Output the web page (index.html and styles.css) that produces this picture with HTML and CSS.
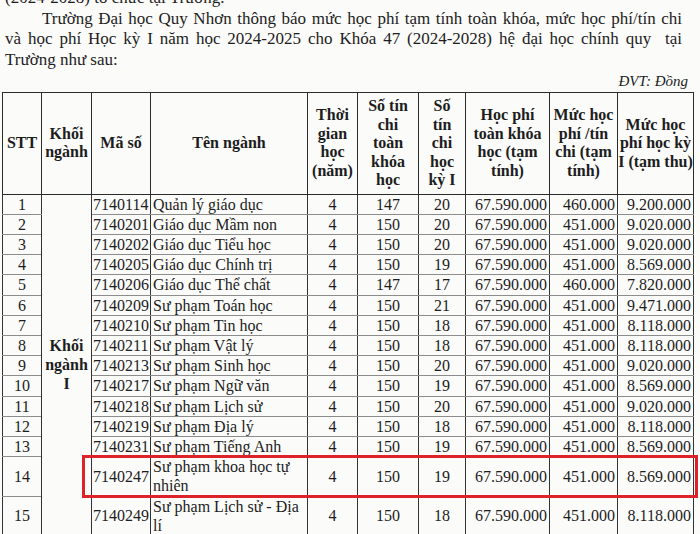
FILE: index.html
```html
<!DOCTYPE html>
<html lang="vi">
<head>
<meta charset="utf-8">
<title>Học phí Khóa 47</title>
<link rel="stylesheet" href="styles.css">
</head>
<body>
<div class="page">
  <div class="intro">
    <div class="line">(2024-2028) tổ chức tại Trường.</div>
    <div class="line just indent">Trường Đại học Quy Nhơn thông báo mức học phí tạm tính toàn khóa, mức học phí/tín chi</div>
    <div class="line just">và học phí Học kỳ I năm học 2024-2025 cho Khóa 47 (2024-2028) hệ đại học chính quy&nbsp; tại</div>
    <div class="line">Trường như sau:</div>
  </div>
  <div class="unit">ĐVT: Đồng</div>
  <table class="fees">
    <colgroup>
      <col class="c-stt"><col class="c-group"><col class="c-code"><col class="c-name"><col class="c-years">
      <col class="c-credits"><col class="c-sem"><col class="c-total"><col class="c-rate"><col class="c-fee">
    </colgroup>
    <thead>
      <tr>
        <th>STT</th>
        <th>Khối<br>ngành</th>
        <th>Mã số</th>
        <th>Tên ngành</th>
        <th>Thời<br>gian<br>học<br>(năm)</th>
        <th>Số tín<br>chi<br>toàn<br>khóa<br>học</th>
        <th>Số<br>tín<br>chi<br>học<br>kỳ I</th>
        <th>Học phí<br>toàn khóa<br>học (tạm<br>tính)</th>
        <th>Mức học<br>phí /tín<br>chi (tạm<br>tính)</th>
        <th>Mức học<br>phí học kỳ<br>I (tạm thu)</th>
      </tr>
    </thead>
    <tbody>
      <tr><td class="ctr">1</td><td class="group" rowspan="15">Khối<br>ngành<br>I</td><td class="code">7140114</td><td class="name">Quản lý giáo dục</td><td class="ctr">4</td><td class="ctr">147</td><td class="ctr">20</td><td class="num">67.590.000</td><td class="num">460.000</td><td class="num">9.200.000</td></tr>
      <tr><td class="ctr">2</td><td class="code">7140201</td><td class="name">Giáo dục Mầm non</td><td class="ctr">4</td><td class="ctr">150</td><td class="ctr">20</td><td class="num">67.590.000</td><td class="num">451.000</td><td class="num">9.020.000</td></tr>
      <tr><td class="ctr">3</td><td class="code">7140202</td><td class="name">Giáo dục Tiểu học</td><td class="ctr">4</td><td class="ctr">150</td><td class="ctr">20</td><td class="num">67.590.000</td><td class="num">451.000</td><td class="num">9.020.000</td></tr>
      <tr><td class="ctr">4</td><td class="code">7140205</td><td class="name">Giáo dục Chính trị</td><td class="ctr">4</td><td class="ctr">150</td><td class="ctr">19</td><td class="num">67.590.000</td><td class="num">451.000</td><td class="num">8.569.000</td></tr>
      <tr><td class="ctr">5</td><td class="code">7140206</td><td class="name">Giáo dục Thể chất</td><td class="ctr">4</td><td class="ctr">147</td><td class="ctr">17</td><td class="num">67.590.000</td><td class="num">460.000</td><td class="num">7.820.000</td></tr>
      <tr><td class="ctr">6</td><td class="code">7140209</td><td class="name">Sư phạm Toán học</td><td class="ctr">4</td><td class="ctr">150</td><td class="ctr">21</td><td class="num">67.590.000</td><td class="num">451.000</td><td class="num">9.471.000</td></tr>
      <tr><td class="ctr">7</td><td class="code">7140210</td><td class="name">Sư phạm Tin học</td><td class="ctr">4</td><td class="ctr">150</td><td class="ctr">18</td><td class="num">67.590.000</td><td class="num">451.000</td><td class="num">8.118.000</td></tr>
      <tr><td class="ctr">8</td><td class="code">7140211</td><td class="name">Sư phạm Vật lý</td><td class="ctr">4</td><td class="ctr">150</td><td class="ctr">18</td><td class="num">67.590.000</td><td class="num">451.000</td><td class="num">8.118.000</td></tr>
      <tr><td class="ctr">9</td><td class="code">7140213</td><td class="name">Sư phạm Sinh học</td><td class="ctr">4</td><td class="ctr">150</td><td class="ctr">20</td><td class="num">67.590.000</td><td class="num">451.000</td><td class="num">9.020.000</td></tr>
      <tr><td class="ctr">10</td><td class="code">7140217</td><td class="name">Sư phạm Ngữ văn</td><td class="ctr">4</td><td class="ctr">150</td><td class="ctr">19</td><td class="num">67.590.000</td><td class="num">451.000</td><td class="num">8.569.000</td></tr>
      <tr><td class="ctr">11</td><td class="code">7140218</td><td class="name">Sư phạm Lịch sử</td><td class="ctr">4</td><td class="ctr">150</td><td class="ctr">20</td><td class="num">67.590.000</td><td class="num">451.000</td><td class="num">9.020.000</td></tr>
      <tr><td class="ctr">12</td><td class="code">7140219</td><td class="name">Sư phạm Địa lý</td><td class="ctr">4</td><td class="ctr">150</td><td class="ctr">18</td><td class="num">67.590.000</td><td class="num">451.000</td><td class="num">8.118.000</td></tr>
      <tr><td class="ctr">13</td><td class="code">7140231</td><td class="name">Sư phạm Tiếng Anh</td><td class="ctr">4</td><td class="ctr">150</td><td class="ctr">19</td><td class="num">67.590.000</td><td class="num">451.000</td><td class="num">8.569.000</td></tr>
      <tr class="tall"><td class="ctr">14</td><td class="code marked">7140247<span class="mark"></span></td><td class="name">Sư phạm khoa học tự nhiên</td><td class="ctr">4</td><td class="ctr">150</td><td class="ctr">19</td><td class="num">67.590.000</td><td class="num">451.000</td><td class="num">8.569.000</td></tr>
      <tr class="tall"><td class="ctr">15</td><td class="code">7140249</td><td class="name">Sư phạm Lịch sử - Địa lí</td><td class="ctr">4</td><td class="ctr">150</td><td class="ctr">18</td><td class="num">67.590.000</td><td class="num">451.000</td><td class="num">8.118.000</td></tr>
    </tbody>
  </table>
</div>
</body>
</html>
```

FILE: styles.css
```css
html, body {
  margin: 0;
  padding: 0;
  background: #fbfbfa;
}

body {
  color: #1d1d1d;
  font-family: "Liberation Serif", "Times New Roman", serif;
}

.page {
  width: 700px;
  height: 534px;
  overflow: hidden;
}

.intro {
  margin-top: -12px;
  padding: 0 18px 0 5px;
  font-size: 17px;
  line-height: 20.5px;
}

.line {
  white-space: nowrap;
}

.just {
  text-align: justify;
  text-align-last: justify;
}

.indent {
  padding-left: 37px;
}

.unit {
  margin-top: 3px;
  padding-right: 12px;
  text-align: right;
  font-style: italic;
  font-size: 15px;
  line-height: 17px;
}

.fees {
  margin: 2px 0 0 2px;
  width: 691px;
  table-layout: fixed;
  border-collapse: collapse;
  font-size: 16px;
}

.c-stt { width: 39px; }
.c-group { width: 50px; }
.c-code { width: 59px; }
.c-name { width: 157px; }
.c-years { width: 50px; }
.c-credits { width: 61px; }
.c-sem { width: 47px; }
.c-total { width: 84px; }
.c-rate { width: 68px; }
.c-fee { width: 76px; }

.fees th {
  font-weight: bold;
  line-height: 18.5px;
  padding: 4px 0;
  text-align: center;
  vertical-align: middle;
  white-space: nowrap;
  border: 1.5px solid #2b2b2b;
}

.fees td {
  line-height: 19.2px;
  padding: 0 2px;
  vertical-align: middle;
  border-left: 1.5px solid #333;
  border-right: 1.5px solid #333;
  border-top: 1px solid #8c8c8c;
  border-bottom: 1px solid #8c8c8c;
  white-space: nowrap;
}

.fees td.ctr { text-align: center; }
.fees td.num { text-align: right; }
.fees td.code { padding-left: 1px; padding-right: 0; }
.fees td.name { white-space: normal; }

.fees td.group {
  vertical-align: top;
  text-align: center;
  font-weight: bold;
  line-height: 19px;
  padding-top: 141px;
}

.fees td.marked {
  position: relative;
}

.mark {
  position: absolute;
  left: -10px;
  top: -2px;
  bottom: -2px;
  width: 616px;
  box-sizing: border-box;
  border: 3px solid #dd2229;
  pointer-events: none;
}
```
